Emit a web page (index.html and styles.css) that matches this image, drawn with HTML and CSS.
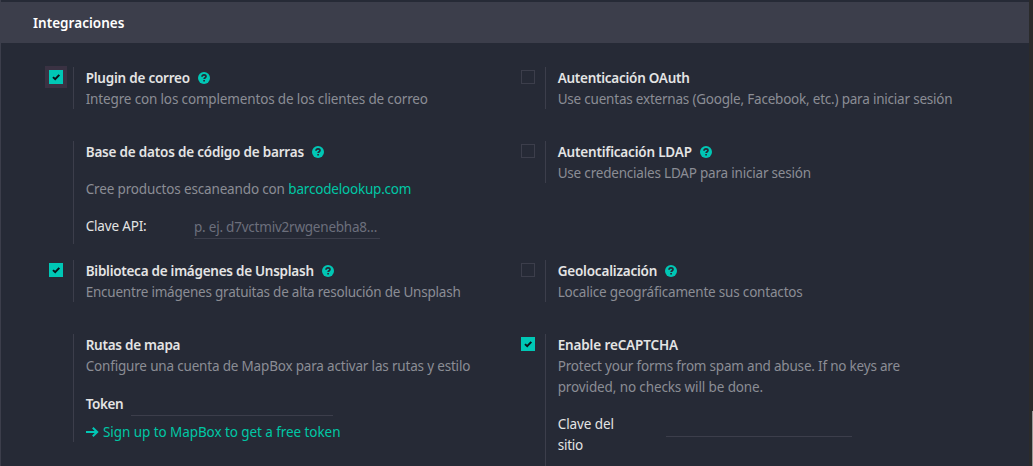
FILE: index.html
```html
<!DOCTYPE html>
<html lang="es">
<head>
<meta charset="utf-8">
<title>Integraciones</title>
<link rel="stylesheet" href="styles.css">
</head>
<body>
<svg class="defs" width="0" height="0">
  <symbol id="help" viewBox="0 0 12 12"><circle cx="6" cy="6" r="6" fill="#00c7b5"/><path d="M4 4.700C4.100 3.400 4.900 2.900 6 2.900c1.100 0 2 .65 2 1.600C8 5.700 6.100 5.700 6.100 7.100M6.100 8v1.500" fill="none" stroke="#262a36" stroke-width="1.700"/></symbol>
  <symbol id="check" viewBox="0 0 14 14"><path d="M4 7.100L6.200 9.200L10.300 4.900" fill="none" stroke="#0b1118" stroke-width="2"/></symbol>
</svg>
<div class="window">
  <main class="panel">
    <h2 class="heading"><span class="t-head">Integraciones</span></h2>
    <div class="grid">
      <section class="setting">
        <span class="box on focus"><svg><use href="#check"/></svg></span>
        <div class="body">
          <h3 class="title"><span class="a1">Plugin de correo</span><svg class="help"><use href="#help"/></svg></h3>
          <p class="desc"><span class="a2">Integre con los complementos de los clientes de correo</span></p>
        </div>
      </section>
      <section class="setting">
        <span class="box"></span>
        <div class="body">
          <h3 class="title"><span class="b1">Autenticación OAuth</span></h3>
          <p class="desc"><span class="b2">Use cuentas externas (Google, Facebook, etc.) para iniciar sesión</span></p>
        </div>
      </section>
      <section class="setting">
        <div class="body tall">
          <h3 class="title"><span class="c1">Base de datos de código de barras</span><svg class="help"><use href="#help"/></svg></h3>
          <p class="desc spaced"><span class="c2">Cree productos escaneando con</span> <a class="link c3">barcodelookup.com</a></p>
          <div class="field spaced"><label class="label"><span class="c4">Clave API:</span></label><div class="input"><span class="c5">p. ej. d7vctmiv2rwgenebha8...</span></div></div>
        </div>
      </section>
      <section class="setting">
        <span class="box"></span>
        <div class="body">
          <h3 class="title"><span class="d1">Autentificación LDAP</span><svg class="help"><use href="#help"/></svg></h3>
          <p class="desc"><span class="d2">Use credenciales LDAP para iniciar sesión</span></p>
        </div>
      </section>
      <section class="setting">
        <span class="box on"><svg><use href="#check"/></svg></span>
        <div class="body">
          <h3 class="title"><span class="e1">Biblioteca de imágenes de Unsplash</span><svg class="help"><use href="#help"/></svg></h3>
          <p class="desc"><span class="e2">Encuentre imágenes gratuitas de alta resolución de Unsplash</span></p>
        </div>
      </section>
      <section class="setting">
        <span class="box"></span>
        <div class="body">
          <h3 class="title"><span class="f1">Geolocalización</span><svg class="help"><use href="#help"/></svg></h3>
          <p class="desc"><span class="f2">Localice geográficamente sus contactos</span></p>
        </div>
      </section>
      <section class="setting">
        <div class="body map">
          <h3 class="title"><span class="g1">Rutas de mapa</span></h3>
          <p class="desc"><span class="g2">Configure una cuenta de MapBox para activar las rutas y estilo</span></p>
          <div class="token"><label class="title token-label"><span class="g3">Token</span></label><div class="token-input"></div></div>
          <a class="link signup"><svg class="arrow" viewBox="0 0 13 12"><path d="M0 6H11M6.800 1.700L11.200 6L6.800 10.300" fill="none" stroke="#00c7b5" stroke-width="2"/></svg><span class="g4">Sign up to MapBox to get a free token</span></a>
        </div>
      </section>
      <section class="setting">
        <span class="box on"><svg><use href="#check"/></svg></span>
        <div class="body captcha">
          <h3 class="title"><span class="h1">Enable reCAPTCHA</span></h3>
          <p class="desc"><span class="h2">Protect your forms from spam and abuse. If no keys are</span><br><span class="h3">provided, no checks will be done.</span></p>
          <div class="field spaced"><label class="label"><span class="h4">Clave del</span><br><span class="h5">sitio</span></label><div class="input"></div></div>
        </div>
      </section>
    </div>
  </main>
  <div class="scroll"><div class="thumb"></div></div>
</div>
</body>
</html>
```
FILE: styles.css
```css
* { box-sizing: border-box; }
body { margin: 0; background: #262a36; font: 13.5px/21px "Noto Sans", sans-serif; color: #e4e4e4; }
h2, h3, p { margin: 0; font-size: inherit; }
.defs { display: block; }
.window { display: flex; height: 466px; overflow: hidden; }
.panel { flex: 1; border-left: 1px solid #3c3e4b; padding-top: 2px; min-width: 0; }
.heading { height: 41px; padding: 11px 0 0 32px; background: #3c3e4b; color: #fff; font-weight: 600; }
.grid { display: grid; grid-template-columns: 472px 472px; grid-template-rows: 74px 119px 74px 140px; padding: 24px 0 0 48px; }
.setting { display: flex; align-items: flex-start; position: relative; padding-left: 24px; }
.box { position: absolute; left: 0; top: 3px; width: 14px; height: 14px; border: 1px solid #3c3e4b; }
.box svg { display: block; width: 14px; height: 14px; }
.on { border: 0; background: #00c7b5; }
.focus { box-shadow: 0 0 0 4px #3a3243; }
.body { width: 448px; height: 42px; border-left: 1px solid #3c3e4b; padding: 1px 0 0 11.7px; white-space: nowrap; }
.tall { height: 103px; }
.map { height: 108px; }
.captcha { height: 150px; }
.title { display: flex; align-items: center; font-weight: 600; color: #e4e4e4; }
.help { width: 12px; height: 12px; margin: 0 0 2px 8px; }
.desc { color: #8b8d95; }
.spaced { margin-top: 16px; }
.link { color: #00c7a5; }
.field { display: flex; color: #e4e4e4; }
.label { width: 108.3px; }
.input { width: 186px; height: 23px; padding-top: 1px; border-bottom: 1px solid #3c3e4b; color: #6c6f7c; }
.token { display: flex; margin-top: 17px; height: 22px; }
.token-label { width: 45.3px; height: 21px; }
.token-input { width: 202px; height: 22px; border-bottom: 1px solid #3c3e4b; }
.signup { display: flex; align-items: center; margin-top: 6px; }
.arrow { width: 13px; height: 12px; margin: 0 4.300px 2px 0; }
.scroll { width: 4px; background: #2b2b2b; padding: 411px 0 0 3px; }
.thumb { height: 55px; background: #9a9a9a; }

/* Tracking */
.t-head { letter-spacing: .03px; }
.a1 { letter-spacing: -.23px; }
.a2 { letter-spacing: -.15px; }
.b1 { letter-spacing: -.26px; }
.b2 { letter-spacing: -.21px; }
.c1 { letter-spacing: -.2px; }
.c2 { letter-spacing: -.15px; }
.c3 { letter-spacing: -.2px; }
.c4 { letter-spacing: -.17px; }
.c5 { letter-spacing: -.22px; }
.d1 { letter-spacing: -.19px; }
.d2 { letter-spacing: -.2px; }
.e1 { letter-spacing: -.26px; }
.e2 { letter-spacing: -.22px; }
.f1 { letter-spacing: -.2px; }
.f2 { letter-spacing: -.19px; }
.g1 { letter-spacing: -.26px; }
.g2 { letter-spacing: -.18px; }
.g3 { letter-spacing: -.4px; }
.g4 { letter-spacing: -.07px; }
.h1 { letter-spacing: -.14px; }
.h2 { letter-spacing: -.2px; }
.h3 { letter-spacing: -.12px; }
.h4 { letter-spacing: -.09px; }
.h5 { letter-spacing: -.25px; }
```
